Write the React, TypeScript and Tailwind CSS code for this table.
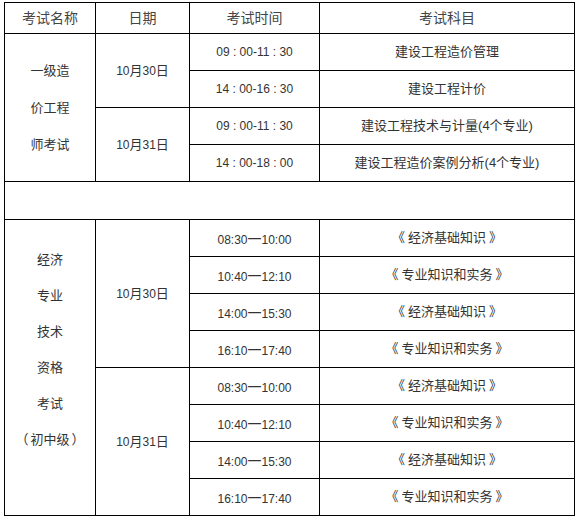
import React from "react";

const cell = "border-r border-b border-black flex items-center justify-center text-center";
const ff = "font-['Liberation_Sans','Noto_Sans_CJK_SC',sans-serif]";

function D({ n }: { n: string }) {
  return <span className="text-[12px]">{n}</span>;
}

function Open({ c }: { c: string }) {
  return <span className="inline-block w-[13px] text-right">{c}</span>;
}
function Close({ c }: { c: string }) {
  return <span className="inline-block w-[13px] text-left">{c}</span>;
}

function DateCell({ day, span }: { day: string; span: string }) {
  return (
    <div className={`${cell} ${span} text-[13px] text-[#333]`}>
      <span>
        <D n="10" />月<D n={day} />日
      </span>
    </div>
  );
}

function Time({ t }: { t: string }) {
  const parts = t.split("一");
  return (
    <div className={`${cell} text-[12px] text-[#333]`}>
      {parts.length === 2 ? (
        <span>
          {parts[0]}
          <span className="text-[14px] font-['Noto_Sans_CJK_SC',sans-serif]">一</span>
          {parts[1]}
        </span>
      ) : (
        <span>{t}</span>
      )}
    </div>
  );
}

function Subj({ s }: { s: string }) {
  const m = s.match(/^《(.*)》$/);
  return (
    <div className={`${cell} text-[13px] text-[#333]`}>
      {m ? (
        <span className="flex items-center">
          <span className="inline-block w-[13px] text-right">
            <span className="relative -left-[3px]">《</span>
          </span>
          <span>{m[1]}</span>
          <span className="inline-block w-[13px] text-left">
            <span className="relative left-[3px]">》</span>
          </span>
        </span>
      ) : (
        s
      )}
    </div>
  );
}

export default function App() {
  const rows1 = [
    ["09 : 00-11 : 30", "建设工程造价管理"],
    ["14 : 00-16 : 30", "建设工程计价"],
    ["09 : 00-11 : 30", "建设工程技术与计量(4个专业)"],
    ["14 : 00-18 : 00", "建设工程造价案例分析(4个专业)"],
  ];
  const rows2 = [
    ["08:30一10:00", "《经济基础知识》"],
    ["10:40一12:10", "《专业知识和实务》"],
    ["14:00一15:30", "《经济基础知识》"],
    ["16:10一17:40", "《专业知识和实务》"],
    ["08:30一10:00", "《经济基础知识》"],
    ["10:40一12:10", "《专业知识和实务》"],
    ["14:00一15:30", "《经济基础知识》"],
    ["16:10一17:40", "《专业知识和实务》"],
  ];
  return (
    <div className={`bg-white w-[580px] h-[520px] pt-[2px] pl-[4px] ${ff}`}>
      <div className="grid w-[571px] grid-cols-[91px_94px_130px_255px] grid-rows-[31px_repeat(4,37px)_38px_repeat(8,37px)] border-l border-t border-black">
        <div className={`${cell} text-[14px] text-[#444]`}>考试名称</div>
        <div className={`${cell} text-[14px] text-[#444]`}>日期</div>
        <div className={`${cell} text-[14px] text-[#444]`}>考试时间</div>
        <div className={`${cell} text-[14px] text-[#444]`}>考试科目</div>

        {rows1.map((r, i) => (
          <React.Fragment key={"a" + i}>
            {i === 0 && (
              <div className={`${cell} row-span-4 text-[13px] text-[#333] leading-[37px] flex-col`}>
                <div>一级造</div>
                <div>价工程</div>
                <div>师考试</div>
              </div>
            )}
            {i === 0 && <DateCell day="30" span="row-span-2" />}
            {i === 2 && <DateCell day="31" span="row-span-2" />}
            <Time t={r[0]} />
            <Subj s={r[1]} />
          </React.Fragment>
        ))}

        <div className={`${cell} col-span-4`}></div>

        {rows2.map((r, i) => (
          <React.Fragment key={"b" + i}>
            {i === 0 && (
              <div className={`${cell} row-span-8 text-[13px] text-[#333] leading-[36px] flex-col`}>
                <div>经济</div>
                <div>专业</div>
                <div>技术</div>
                <div>资格</div>
                <div>考试</div>
                <div className="flex">
                  <Open c="（" />
                  <span className="px-[2px]">初中级</span>
                  <Close c="）" />
                </div>
                <div>&nbsp;</div>
              </div>
            )}
            {i === 0 && <DateCell day="30" span="row-span-4" />}
            {i === 4 && <DateCell day="31" span="row-span-4" />}
            <Time t={r[0]} />
            <Subj s={r[1]} />
          </React.Fragment>
        ))}
      </div>
    </div>
  );
}
